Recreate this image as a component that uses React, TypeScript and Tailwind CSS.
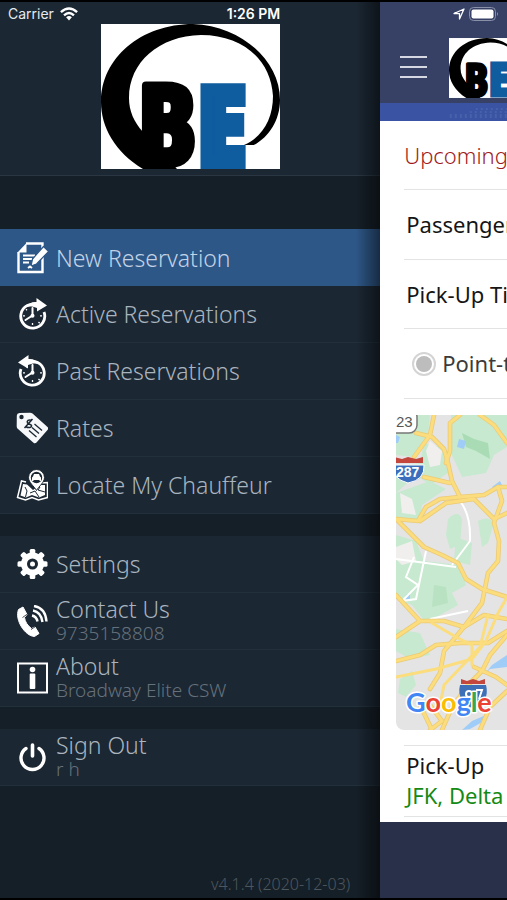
import { ReactNode } from 'react';

interface MenuItemProps {
  icon: ReactNode;
  label: string;
  detail?: string;
  active?: boolean;
}

function BrandLogo({ className }: { className: string }) {
  return (
    <svg viewBox="0 0 179 145" className={className} role="img" aria-label="BE">
      <rect width="179" height="145" fill="#fff" />
      <path
        d="M42 145C14 128 0 103 0 78C0 34 40 0 92 0C140 2 179 36 179 76C179 96 168 113 153 121L143 121C162 113 172 94 172 72C170 36 142 11 100 11C58 12 28 38 28 74C28 87 33 98 42 108L76 145Z"
        fill="#000"
      />
      <g
        fontFamily='"Liberation Sans Narrow", "Open Sans Condensed", "Liberation Sans", sans-serif'
        fontWeight="700"
      >
        <text x="38" y="140" fontSize="110" fill="#000" stroke="#000" strokeWidth="8" strokeLinejoin="round">B</text>
        <text x="99" y="139" fontSize="103" fill="#0f5c9f" stroke="#0f5c9f" strokeWidth="12">E</text>
      </g>
    </svg>
  );
}

function NoteIcon() {
  return (
    <svg viewBox="0 0 32 32" className="size-8 shrink-0" fill="none" stroke="#fff" aria-hidden="true">
      <path d="M10 1.500H26.500V30H2.500V10" strokeWidth="2.400" />
      <path d="M1.500 10.500L10.500 1V10.500Z" fill="#fff" stroke="none" />
      <path d="M7 13.500H19M7 17H16M7 20.500H13" strokeWidth="1.900" />
      <path d="M27.500 4.500L32.500 9.500L20.500 22L15 24L16.500 17Z" fill="#fff" stroke="#2d5787" strokeWidth="1.200" />
      <path d="M12 26L14 24.500L16 26" strokeWidth="2" />
    </svg>
  );
}

function ClockIcon({ past = false }: { past?: boolean }) {
  return (
    <svg viewBox="0 0 32 32" className="size-8 shrink-0" fill="none" stroke="#fff" aria-hidden="true">
      <g transform={past ? 'translate(33 0) scale(-1 1)' : undefined}>
        <path d="M22 7.400A12 12 0 1 0 28 14" strokeWidth="2.800" />
        <path d="M20.500 0L31 7.500L21 13.500V10C18 8.500 14 8 10 9C13 4.500 17 3.500 20.500 4Z" fill="#fff" stroke="none" />
      </g>
      <path d="M16.500 10V17.500L9.500 22" strokeWidth="2" strokeLinecap="round" />
      <circle cx="16.500" cy="17.800" r="2" fill="#fff" stroke="none" />
      <path d="M16.500 25V27M7 17.800H9M24 17.800H26M22.500 24L23.700 25.200M10 11.300L11 12.300" strokeWidth="1.300" />
    </svg>
  );
}

function TagIcon() {
  return (
    <svg viewBox="0 0 32 32" className="size-8 shrink-0" aria-hidden="true">
      <path d="M3.500 1L14 .700Q15.500 .700 16.500 1.500L31.500 15Q33 16.500 31.500 18L20.500 30.500Q19 32 17.500 30.800L2 17Q.700 16 .700 14.500L.800 3.500Q.900 1.300 3.500 1Z" fill="#f6f8fa" />
      <circle cx="5.500" cy="5" r="2.200" fill="#1b2733" />
      <g stroke="#1b2733" fill="none">
        <path d="M16 8.500C12.500 7 10.500 9 11.500 11C12.500 12.500 15 12 15.500 13.500C16 15.500 13 16.500 9.500 14.500M16.500 7L8.500 16" strokeWidth="1.500" />
        <path d="M18.500 12L26 18.500M16 15.500L23 21.500M13 18.500L20.500 25" strokeWidth="1.300" />
      </g>
    </svg>
  );
}

function MapPinIcon() {
  return (
    <svg viewBox="0 0 32 32" className="size-8 shrink-0" fill="none" stroke="#fff" aria-hidden="true">
      <path d="M10 13L5.500 12L1.500 28.500L9.500 31L16 28.500L22.500 31L31.500 28.500V13.500L25 14" strokeWidth="1.500" />
      <path d="M7 15L11 15.500L17 21L24 16L29 16V26L23 28.500L16 26L10 28.500L4.500 26.500Z" fill="#fff" stroke="none" />
      <path d="M9 18L11 22L9.500 28M14 24L19 22L23 28M24 18L22 21L29 23" stroke="#1b2733" strokeWidth="1" />
      <path d="M20.500 21.500C18 17 12.500 13.500 12.500 8.500A8 8 0 0 1 28.500 8.500C28.500 13.500 23 17 20.500 21.500Z" fill="#fff" stroke="#1b2733" strokeWidth="1" />
      <circle cx="20.500" cy="8.500" r="5.700" fill="#1b2733" stroke="none" />
      <path d="M17 7.500L18 5H23L24 7.500L25 8.500V12H23.500V11H17.500V12H16V8.500Z" fill="#fff" stroke="none" />
    </svg>
  );
}

function GearIcon() {
  const teeth = [0, 45, 90, 135, 180, 225, 270, 315];
  return (
    <svg viewBox="0 0 32 32" className="size-8 shrink-0" fill="none" aria-hidden="true">
      <circle cx="16.500" cy="16" r="8.500" stroke="#fff" strokeWidth="6" />
      {teeth.map((angle) => (
        <rect key={angle} x="13.700" y="1" width="5.600" height="6" rx="1.500" fill="#fff" transform={`rotate(${angle} 16.500 16)`} />
      ))}
      <circle cx="16.500" cy="16" r="2.500" fill="#fff" />
    </svg>
  );
}

function PhoneIcon() {
  return (
    <svg viewBox="0 0 32 32" className="size-8 shrink-0" fill="none" aria-hidden="true">
      <path
        d="M2.500 4.500L7 2L11 9.500L8.500 12.500C9 17 12 21 15.500 23.500L19 22L23 28.500L18.500 31.500C9 31 -1.500 15 2.500 4.500Z"
        fill="#fff"
        stroke="#fff"
        strokeWidth="1"
        strokeLinejoin="round"
      />
      <path d="M6.500 12.500L11.500 9M15 24.500L19.500 21.500" stroke="#1b2733" strokeWidth=".800" />
      <path d="M16 10.500Q20.500 11.500 21.500 16.500M17 5.500Q25 7 26.500 17M18 1Q29.500 3 30.500 16.500" stroke="#fff" strokeWidth="2.400" />
    </svg>
  );
}

function InfoIcon() {
  return (
    <svg viewBox="0 0 32 32" className="size-8 shrink-0" fill="#fff" aria-hidden="true">
      <rect x="2" y="1.500" width="29" height="29" fill="none" stroke="#fff" strokeWidth="2" />
      <circle cx="16.500" cy="7.500" r="2.800" />
      <rect x="13.700" y="11.500" width="5.600" height="15.500" rx="1" />
    </svg>
  );
}

function PowerIcon() {
  return (
    <svg viewBox="0 0 32 32" className="size-8 shrink-0" fill="none" stroke="#fff" strokeLinecap="round" aria-hidden="true">
      <path d="M10 7.500A11.500 11.500 0 1 0 23 7.500" strokeWidth="3.400" />
      <path d="M16.500 4V15" strokeWidth="3.600" />
    </svg>
  );
}

function MenuItem({ icon, label, detail, active = false }: MenuItemProps) {
  return (
    <li className={active ? 'h-[57px] bg-[#2d5787]' : 'h-[57px] border-b border-[#22303c] bg-[#1b2733]'}>
      <a href="#" className="flex h-full items-center gap-2 pl-4">
        {icon}
        <span className="flex flex-col whitespace-nowrap">
          <span className={active ? 'text-[23px] leading-6 font-light text-[#c3d3e6]' : 'text-[23px] leading-6 font-light text-[#a9b4bf]'}>
            {label}
          </span>
          {detail && <span className="text-[19px] leading-6 font-light text-[#66717b]">{detail}</span>}
        </span>
      </a>
    </li>
  );
}

function StatusBar() {
  return (
    <div className="absolute inset-x-0 top-0 z-20 grid h-6 grid-cols-3 items-center px-2 font-['Inter',sans-serif] text-sm text-[#e6eaee]">
      <div className="flex items-center gap-1.5">
        <span>Carrier</span>
        <svg viewBox="0 0 20 15" className="h-3.5 w-[18px]" fill="none" stroke="#fff" strokeWidth="2.700" aria-hidden="true">
          <path d="M1 5.500Q10 -2.500 19 5.500M4.500 9Q10 4 15.500 9" />
          <path d="M6.800 11.200Q10 8.500 13.200 11.200L10 14.800Z" fill="#fff" stroke="none" />
        </svg>
      </div>
      <span className="text-center font-semibold text-white">1:26 PM</span>
      <div className="flex items-center justify-end gap-1">
        <svg viewBox="0 0 12 12" className="size-3" fill="none" stroke="#fff" strokeWidth="1.300" strokeLinejoin="round" aria-hidden="true">
          <path d="M1 5.500L11 1L6.500 11V5.700Z" />
        </svg>
        <svg viewBox="0 0 30 14" className="h-3.5 w-[30px]" aria-hidden="true">
          <rect x=".500" y=".500" width="26" height="13" rx="4" fill="none" stroke="#8991a8" />
          <rect x="2.500" y="2.500" width="22" height="9" rx="2" fill="#fff" />
          <path d="M28 5Q30 7 28 9Z" fill="#8991a8" />
        </svg>
      </div>
    </div>
  );
}

function RouteMap() {
  return (
    <svg viewBox="0 0 111 315" preserveAspectRatio="xMinYMin slice" className="h-[315px] w-full rounded-l-lg" role="img" aria-label="Map">
      <rect width="111" height="315" fill="#e4e4e5" />
      <g fill="#c7e9cf">
        <path d="M0 0H34L32 20L18 42L0 40Z" />
        <path d="M55 0H111V32L98 40L90 58L66 62L54 36Z" />
        <path d="M28 28L45 32L52 58L34 70L20 60L0 78V52L24 48Z" />
        <path d="M0 78L34 66L50 74L26 90L24 104L0 106Z" />
        <path d="M52 104Q62 94 66 104L64 130L54 134L50 120Z" />
        <path d="M82 106Q92 100 98 108L92 128L86 132Z" />
        <path d="M0 120L20 126L28 146L64 150L70 170L56 178L62 190L30 208L16 190L0 184Z" />
        <path d="M60 122L76 128L74 150L58 146Z" />
        <path d="M0 214L24 218L34 240L14 244L0 236Z" />
        <path d="M4 264L16 256L20 270L10 282L2 278Z" />
      </g>
      <g fill="#a9dcb5">
        <path d="M66 18L78 24L92 28L94 44L80 36L70 32Z" />
      </g>
      <path d="M38 170L50 172L52 188L36 192Z" fill="#b8e2c1" />
      <g fill="#f0efed">
        <path d="M34 26L46 36L44 50L34 52L30 36Z" />
        <path d="M4 78L16 84L20 100L6 98Z" />
        <path d="M0 132L16 126L20 146L6 150L0 144Z" />
      </g>
      <g fill="#9fcdf8">
        <path d="M63 24L70 26L68 34L61 32Z" />
        <path d="M0 20L4 22L2 28L0 28Z" />
        <path d="M96 72L104 66L106 70L98 75Z" />
        <path d="M111 240L96 250L88 260L94 254L111 252Z" />
        <path d="M10 180L14 178L14 184L8 184Z" />
        <path d="M66 315L76 306L90 300L88 306L74 314Z" />
      </g>
      <g fill="none" stroke="#fff" strokeWidth="2">
        <path d="M64 86Q75 100 74 126L56 150M0 144L60 152M30 136L20 184L6 186L22 170L10 162L18 142M34 204L72 196" />
      </g>
      <g fill="none" strokeLinejoin="round" strokeLinecap="round">
        <g stroke="#ecca74" strokeWidth="4.600">
          <path d="M38 0L34 20L18 42M20 18L36 22L48 34L52 48L56 66L64 82" />
          <path d="M64 0L54 8L54 36L50 48M84 0L98 10L111 28" />
          <path d="M28 62L54 68M0 104L22 106L30 92L44 84L64 82L88 80L102 72L111 72" />
          <path d="M24 106L50 88L78 84L98 104L111 98M102 72L106 86L98 108L103 126L102 146L92 158L86 188L68 212L48 236L44 258L34 274" />
          <path d="M0 104L28 132L46 140L62 148L70 164L86 174L111 182M0 180L24 206L48 206L68 212L88 200L111 204M24 206L0 222" />
          <path d="M0 246L24 240L40 230L64 228L92 228L111 216" />
          <path d="M111 220L94 240L86 256L72 270L56 292L46 315M78 252L100 262L111 270M24 290L36 315M34 290L46 306L34 315M111 276L94 292L84 315" />
        </g>
        <g stroke="#fbdd7e" strokeWidth="3">
          <path d="M38 0L34 20L18 42M20 18L36 22L48 34L52 48L56 66L64 82" />
          <path d="M64 0L54 8L54 36L50 48M84 0L98 10L111 28" />
          <path d="M28 62L54 68M0 104L22 106L30 92L44 84L64 82L88 80L102 72L111 72" />
          <path d="M24 106L50 88L78 84L98 104L111 98M102 72L106 86L98 108L103 126L102 146L92 158L86 188L68 212L48 236L44 258L34 274" />
          <path d="M0 104L28 132L46 140L62 148L70 164L86 174L111 182M0 180L24 206L48 206L68 212L88 200L111 204M24 206L0 222" />
          <path d="M0 246L24 240L40 230L64 228L92 228L111 216" />
          <path d="M111 220L94 240L86 256L72 270L56 292L46 315M78 252L100 262L111 270M24 290L36 315M34 290L46 306L34 315M111 276L94 292L84 315" />
          <path d="M0 262L40 254L76 244L90 226L102 198L110 184M36 208L60 222L76 230L76 250M92 200L84 232L48 270L44 290" />
        </g>
      </g>
      <g fontFamily='"Liberation Sans", Arial, sans-serif'>
        <rect x="-10" y="-6" width="31" height="24" rx="8" fill="#fff" stroke="#777" strokeWidth="1.500" />
        <text x="0" y="12" fontSize="15" fill="#555">23</text>
        <path d="M-4 50H28Q29 65 12 68Q-4 64 -4 50Z" fill="#3b6fbd" stroke="#fff" />
        <path d="M-2 42L6 44L12 42L20 44L27 42V48H-2Z" fill="#c4473d" />
        <text x="0" y="62" fontSize="14" fontWeight="700" fill="#fff">287</text>
        <path d="M64 270H90Q94 286 78 294Q60 286 64 270Z" fill="#3e70b8" />
        <path d="M65 264L71 266L77 264L83 266L89 264V269H65Z" fill="#c4473d" />
        <circle cx="73" cy="279" r="3" fill="none" stroke="#fff" strokeWidth="2" />
        <path d="M80 275H86L83 284" fill="none" stroke="#fff" strokeWidth="2" />
      </g>
      <text
        x="10"
        y="297"
        fontSize="27"
        fontWeight="700"
        fontFamily="Lato, sans-serif"
        stroke="#fff"
        strokeWidth="3"
        strokeLinejoin="round"
        paintOrder="stroke"
      >
        <tspan fill="#4285f4">G</tspan>
        <tspan fill="#ea4335">o</tspan>
        <tspan fill="#fbbc05">o</tspan>
        <tspan fill="#4285f4">g</tspan>
        <tspan fill="#34a853">l</tspan>
        <tspan fill="#ea4335">e</tspan>
      </text>
    </svg>
  );
}

function BookingPanel() {
  return (
    <main className="relative z-10 flex min-w-0 flex-1 flex-col overflow-hidden whitespace-nowrap bg-[#28304a] text-[22px] text-[#151515]">
      <header className="bg-[#364165] pt-9">
        <div className="flex h-[65px] items-start gap-[22px] pl-5">
          <button type="button" aria-label="Menu" className="mt-[18px] flex w-[27px] shrink-0 flex-col gap-2">
            <span className="h-0.5 w-full bg-[#d5d8e2]" />
            <span className="h-0.5 w-full bg-[#d5d8e2]" />
            <span className="h-0.5 w-full bg-[#d5d8e2]" />
          </button>
          <BrandLogo className="h-[60px] w-[74px] shrink-0" />
        </div>
      </header>
      <div className="h-[18px] bg-[#3b53a3]">
        <svg viewBox="0 0 127 18" preserveAspectRatio="xMaxYMin slice" className="h-full w-full" fill="none" stroke="#6685c2" strokeWidth="1" strokeDasharray="2 3" aria-hidden="true">
          <path d="M96 6H127M90 9H127M70 12H127M70 14H127" opacity=".6" />
        </svg>
      </div>
      <div className="bg-white pb-[5px]">
        <div className="ml-6 flex h-[69px] items-center border-b border-[#e3e3e3] font-light text-[#a01c1c]">Upcoming</div>
        <div className="ml-6 flex h-[70px] items-center border-b border-[#e3e3e3] pl-0.5">Passenger</div>
        <div className="ml-6 flex h-[69px] items-center border-b border-[#e3e3e3] pl-0.5">Pick-Up Time</div>
        <label className="ml-6 flex h-[70px] items-center gap-1.5 border-b border-[#e3e3e3] pl-2 text-[#3b3b3b]">
          <input
            type="radio"
            name="trip"
            className="size-6 shrink-0 appearance-none rounded-full border-2 border-[#d4d4d4] bg-[#bdbdbd] bg-clip-content p-0.5"
          />
          Point-to-Point
        </label>
        <div className="pt-4 pb-[15px] pl-4">
          <RouteMap />
        </div>
        <div className="ml-6 border-y border-[#e3e3e3] pt-1 pb-1.5 pl-0.5 leading-[30px]">
          <p>Pick-Up</p>
          <p className="text-[#148a14]">JFK, Delta</p>
        </div>
      </div>
    </main>
  );
}

export default function App() {
  return (
    <div className="relative flex min-h-screen overflow-hidden border-y-2 border-black bg-[#151f27] font-['Noto_Sans','Open_Sans',sans-serif]">
      <StatusBar />
      <aside className="flex w-3/4 shrink-0 flex-col">
        <div className="flex justify-center border-b border-[#2a3743] bg-[#1b2733] pt-[22px] pb-1.5">
          <BrandLogo className="h-[145px] w-[179px]" />
        </div>
        <nav className="mt-[53px] flex flex-col gap-[22px]">
          <ul>
            <MenuItem icon={<NoteIcon />} label="New Reservation" active />
            <MenuItem icon={<ClockIcon />} label="Active Reservations" />
            <MenuItem icon={<ClockIcon past />} label="Past Reservations" />
            <MenuItem icon={<TagIcon />} label="Rates" />
            <MenuItem icon={<MapPinIcon />} label="Locate My Chauffeur" />
          </ul>
          <ul>
            <MenuItem icon={<GearIcon />} label="Settings" />
            <MenuItem icon={<PhoneIcon />} label="Contact Us" detail="9735158808" />
            <MenuItem icon={<InfoIcon />} label="About" detail="Broadway Elite CSW" />
          </ul>
          <ul>
            <MenuItem icon={<PowerIcon />} label="Sign Out" detail="r h" />
          </ul>
        </nav>
        <p className="mt-auto pr-[30px] pb-1 text-right text-base leading-5 font-light text-[#4d5760]">v4.1.4 (2020-12-03)</p>
      </aside>
      <div className="pointer-events-none relative z-10 -ml-6 w-6 shrink-0 bg-linear-to-r from-transparent to-black/50" />
      <BookingPanel />
    </div>
  );
}
